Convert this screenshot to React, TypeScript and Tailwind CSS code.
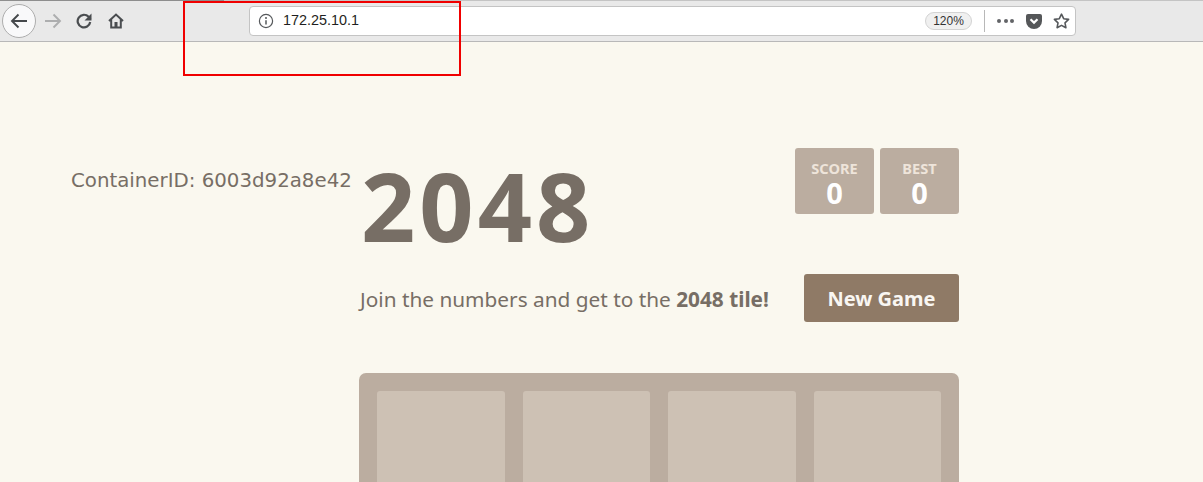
export default function App() {
  const sans = "font-['Noto_Sans','Open_Sans',sans-serif]";
  return (
    <div className="relative h-[482px] w-[1203px] overflow-hidden bg-[#faf8ef]">
      <header className="flex h-[42px] items-center border-t border-b border-t-[#c4c4c4] border-b-[#b8b8b8] bg-[#e9e9e9] pl-[2px] text-[#4a4d50]">
        <button className="flex h-[34px] w-[34px] items-center justify-center rounded-full border border-[#adadad] bg-[#f9f9fa]">
          <svg width="18" height="16" viewBox="0 0 18 16" fill="none" stroke="#45484b" strokeWidth="1.9"><path d="M17 8H2M8.5 1.5 2 8l6.5 6.5" /></svg>
        </button>
        <svg className="ml-[8px]" width="18" height="16" viewBox="0 0 18 16" fill="none" stroke="#adaeaf" strokeWidth="1.9"><path d="M1 8h15M9.5 1.5 16 8l-6.5 6.5" /></svg>
        <svg className="ml-[14px]" width="16" height="16" viewBox="0 0 16 16" fill="none" stroke="#4a4d50" strokeWidth="2.2"><path d="M14.2 9a6.3 6.3 0 1 1-1.6-5.2L14.5 6" /><path d="M15.5 .5v7h-7Z" fill="#4a4d50" stroke="none" /></svg>
        <svg className="ml-[16px]" width="16" height="16" viewBox="0 0 16 16" fill="none" stroke="#4a4d50" strokeWidth="2"><path d="M1 8 8 1.5 15 8M3.2 6.5V14.5h9.6V6.5" /><rect x="6.5" y="9" width="3" height="5.5" fill="#4a4d50" stroke="none" /></svg>
        <div className="ml-[125px] flex h-[30px] w-[827px] items-center rounded-[4px] border border-[#c4c4c4] bg-white pl-[8px] pr-[5px]">
          <svg width="16" height="16" viewBox="0 0 16 16" fill="none" stroke="#55585b" strokeWidth="1.2"><circle cx="8" cy="8" r="6.6" /><path d="M8 7.2v4.4" strokeWidth="1.5" /><circle cx="8" cy="4.9" r="1" fill="#55585b" stroke="none" /></svg>
          <span className="ml-[9px] font-['Liberation_Sans',sans-serif] text-[14.4px] text-[#1f1f21]">172.25.10.1</span>
          <span className="ml-auto flex h-[18px] w-[47px] items-center justify-center rounded-full border border-[#d3d3d3] bg-[#f0f0f0] font-['Liberation_Sans',sans-serif] text-[12px] text-[#333]">120%</span>
          <span className="ml-[12px] h-[22px] w-px bg-[#b8b8b8]" />
          <span className="ml-[12px] flex gap-[2.5px]">
            <i className="h-[4px] w-[4px] rounded-full bg-[#626467]" /><i className="h-[4px] w-[4px] rounded-full bg-[#626467]" /><i className="h-[4px] w-[4px] rounded-full bg-[#626467]" />
          </span>
          <svg className="ml-[12px]" width="16" height="15" viewBox="0 0 16 15"><path d="M2 0h12a2 2 0 0 1 2 2v5a8 8 0 0 1-16 0V2a2 2 0 0 1 2-2Z" fill="#555759" /><path d="m4.5 5.2 3.5 3.4 3.5-3.4" fill="none" stroke="#fff" strokeWidth="2.2" /></svg>
          <svg className="ml-[11px]" width="17" height="16" viewBox="0 0 17 16" fill="none" stroke="#55585b" strokeWidth="1.6" strokeLinejoin="round"><path d="M8.5 1.2 10.7 5.7l4.9.7-3.6 3.4.9 4.9-4.4-2.3-4.4 2.3.9-4.9L1.4 6.4l4.9-.7Z" /></svg>
        </div>
      </header>

      <main className="flex items-start pt-[106px] pl-[71px] text-[#776e65]">
        <p className="mt-[15px] w-[288px] whitespace-nowrap font-['DejaVu_Sans',sans-serif] text-[19.8px] leading-[36px] text-[#776e65]">ContainerID: 6003d92a8e42</p>
        <div className={`w-[600px] ${sans}`}>
          <div className="flex items-start justify-between">
            <h1 className="mb-[10px] pl-[2px] text-[95px] font-bold leading-[114px] tracking-[4px]">2048</h1>
            <div className="flex gap-[6px] font-bold text-white">
              <div className="flex h-[66px] w-[79px] flex-col items-center rounded-[3px] bg-[#bbada0] pt-[10px]">
                <span className="text-[14.6px] leading-[20px] text-[#eee4da]">SCORE</span>
                <span className="text-[29px] leading-[30px]">0</span>
              </div>
              <div className="flex h-[66px] w-[79px] flex-col items-center rounded-[3px] bg-[#bbada0] pt-[10px]">
                <span className="text-[14.6px] leading-[20px] text-[#eee4da]">BEST</span>
                <span className="text-[29px] leading-[30px]">0</span>
              </div>
            </div>
          </div>
          <div className="mt-[2px] flex items-center justify-between">
            <p className="pl-px pt-[2px] text-[20.8px] leading-[46px]">Join the numbers and get to the <b>2048 tile!</b></p>
            <button className="h-[48px] w-[155px] rounded-[3px] bg-[#8f7a66] pt-[2px] text-[20px] font-bold text-[#f9f6f2]">New Game</button>
          </div>
          <div className="mt-[51px] grid h-[600px] grid-cols-4 gap-[18px] rounded-[7px] bg-[#bbada0] p-[18px]">
            {[0, 1, 2, 3].map((i) => <div key={i} className="h-[128px] rounded-[3px] bg-[#cdc1b4]" />)}
          </div>
        </div>
      </main>
      <div className="absolute left-0 top-0 h-px w-[224px] bg-[#8e8e8e]" />
      <div className="absolute left-[183px] top-px h-[75px] w-[278px] border-2 border-[#f00000]" />
    </div>
  );
}
